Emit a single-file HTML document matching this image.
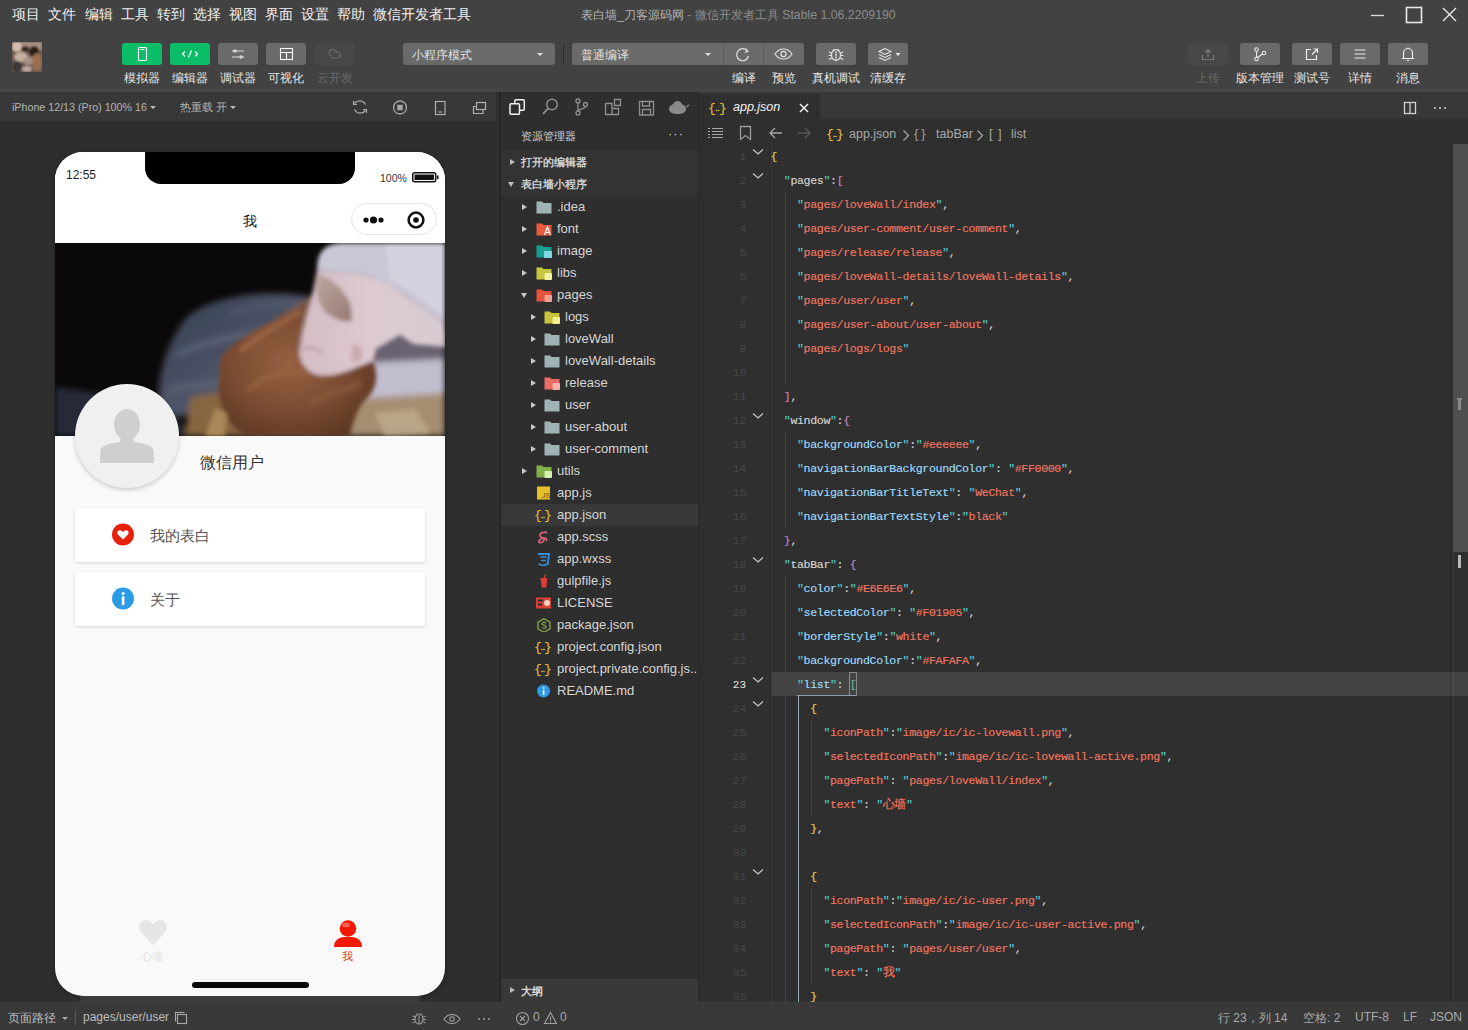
<!DOCTYPE html>
<html><head><meta charset="utf-8"><style>
*{box-sizing:border-box;margin:0;padding:0}
html,body{width:1468px;height:1030px;overflow:hidden;background:#2e2e2e;font-family:"Liberation Sans",sans-serif;color:#ddd}
.abs{position:absolute}
svg{display:block}
#top{position:absolute;left:0;top:0;width:1468px;height:92px;background:#424242;border-bottom:3px solid #464646}
.menu{position:absolute;top:6px;font-size:13.7px;color:#f0f0f0;white-space:nowrap}
.title{position:absolute;top:7px;left:581px;font-size:12.3px;color:#8c8c8c;white-space:nowrap}
.title b{font-weight:normal;color:#b4b4b4}
.tb{position:absolute;top:43px;width:40px;height:22px;border-radius:3px;background:#6a6a6a}
.tb.g{background:#0bbd66}
.tb.d{background:#474747}
.lbl{position:absolute;top:70px;font-size:12px;color:#e6e6e6;white-space:nowrap;text-align:center;width:60px}
.lbl.d{color:#686868}
.dd{background:#6a6a6a;border-radius:3px}
.dd span{position:absolute;top:4px;font-size:12px;color:#e0e0e0;white-space:nowrap}
.dd i{position:absolute;top:10px;width:0;height:0;border-left:3px solid transparent;border-right:3px solid transparent;border-top:3px solid #ddd}
.dd b{position:absolute;top:0;width:1px;height:22px;background:#5a5a5a}
#simbar{position:absolute;left:0;top:92px;width:496px;height:30px;background:#383838;border-bottom:1px solid #313131}
#sim{position:absolute;left:0;top:122px;width:496px;height:880px;background:#2e2e2e;overflow:hidden}
#vdiv{position:absolute;left:496px;top:92px;width:5px;height:910px;background:linear-gradient(90deg,#2b2b2b 0,#2b2b2b 1px,#323232 1px,#323232 3px,#242424 3px)}
#exp{position:absolute;left:501px;top:92px;width:199px;height:910px;background:#2e2e2e;overflow:hidden}
#editor{position:absolute;left:700px;top:92px;width:768px;height:910px;background:#2f2f2f;overflow:hidden}
#status{position:absolute;left:0;top:1002px;width:1468px;height:28px;background:#393939;border-top:1px solid #3e3e3e}
.sb{position:absolute;font-size:12.5px;color:#bdbdbd;white-space:nowrap;top:7px}
.row{position:absolute;left:0;width:199px;height:22px}
.row .t{position:absolute;top:3px;font-size:13px;color:#d6d6d6;white-space:nowrap}
.row .ar{position:absolute;top:8px;width:0;height:0;border-top:3.5px solid transparent;border-bottom:3.5px solid transparent;border-left:5px solid #c8c8c8}
.row .ad{position:absolute;top:9px;width:0;height:0;border-left:3.5px solid transparent;border-right:3.5px solid transparent;border-top:5px solid #c8c8c8}
.row svg{position:absolute;top:4px}
.code{position:absolute;left:0;width:768px;height:24px;font-family:"Liberation Mono",monospace;font-size:11.6px;letter-spacing:-0.36px;white-space:pre;line-height:24px;-webkit-text-stroke:0.15px}
.ln{position:absolute;left:0;width:46px;text-align:right;color:#4d4d4d;font-family:"Liberation Mono",monospace;font-size:11px;line-height:24px}
.k1{color:#d4d4d4}.k2{color:#9cdcfe}.k3{color:#f27660}.s{color:#f27660}.q{color:#56c8c8}.p{color:#d4d4d4}.y{color:#e8d44d}.m{color:#c586c0}
.guide{position:absolute;width:1px;background:#404040}
</style></head><body>
<div id="top">
  <div class="menu" style="left:12px">项目</div>
  <div class="menu" style="left:48px">文件</div>
  <div class="menu" style="left:85px">编辑</div>
  <div class="menu" style="left:121px">工具</div>
  <div class="menu" style="left:157px">转到</div>
  <div class="menu" style="left:193px">选择</div>
  <div class="menu" style="left:229px">视图</div>
  <div class="menu" style="left:265px">界面</div>
  <div class="menu" style="left:301px">设置</div>
  <div class="menu" style="left:337px">帮助</div>
  <div class="menu" style="left:373px">微信开发者工具</div>
  <div class="title"><b>表白墙_刀客源码网</b> - 微信开发者工具 Stable 1.06.2209190</div>
  <!-- window controls -->
  <svg class="abs" style="left:1360px;top:0" width="108" height="30" viewBox="0 0 108 30">
    <path d="M11 15.5H24" stroke="#e0e0e0" stroke-width="1.3"/>
    <rect x="46.5" y="7.5" width="15" height="15" fill="none" stroke="#e8e8e8" stroke-width="1.6"/>
    <path d="M83 8L96 21M96 8L83 21" stroke="#e8e8e8" stroke-width="1.4"/>
  </svg>
  <!-- avatar -->
  <svg class="abs" style="left:12px;top:42px" width="30" height="30" viewBox="0 0 30 30"><defs><filter id="abl"><feGaussianBlur stdDeviation="1.3"/></filter><clipPath id="acl"><rect width="30" height="30"/></clipPath></defs>
  <g clip-path="url(#acl)"><rect width="30" height="30" fill="#6a5a50"/><g filter="url(#abl)">
  <rect x="0" y="0" width="30" height="8" fill="#a89080"/><ellipse cx="5" cy="5" rx="5" ry="5" fill="#d8c0b0"/><ellipse cx="13" cy="7" rx="4" ry="3" fill="#3a2a20"/><ellipse cx="22" cy="9" rx="5" ry="5" fill="#2a1e18"/>
  <ellipse cx="9" cy="15" rx="7" ry="5" fill="#c8b0a0"/><ellipse cx="17" cy="19" rx="6" ry="4" fill="#a89088"/><ellipse cx="25" cy="20" rx="5" ry="9" fill="#9a7050"/>
  <ellipse cx="5" cy="25" rx="5" ry="6" fill="#3a3838"/><ellipse cx="15" cy="27" rx="5" ry="3" fill="#c0a8a0"/></g></g></svg>
  <!-- left buttons -->
  <div class="tb g" style="left:122px"><svg width="40" height="22"><rect x="16.5" y="4.5" width="8" height="13" rx="1" fill="none" stroke="#fff" stroke-width="1.1"/><path d="M18.5 6.5h4" stroke="#fff" stroke-width="1"/></svg></div>
  <div class="tb g" style="left:170px"><svg width="40" height="22"><path d="M15 8.5l-2.5 2.5 2.5 2.5M25 8.5l2.5 2.5-2.5 2.5M21.5 7.5l-3 7" fill="none" stroke="#fff" stroke-width="1.2"/></svg></div>
  <div class="tb" style="left:218px"><svg width="40" height="22"><path d="M14 8h12M14 14h12" stroke="#d8d8d8" stroke-width="1.2"/><circle cx="17" cy="8" r="1.8" fill="#d8d8d8"/><circle cx="23" cy="14" r="1.8" fill="#d8d8d8"/></svg></div>
  <div class="tb" style="left:266px"><svg width="40" height="22"><rect x="14.5" y="5.5" width="12" height="11" fill="none" stroke="#fff" stroke-width="1.1"/><path d="M14.5 9.5h12M20.5 9.5v7" stroke="#fff" stroke-width="1.1"/></svg></div>
  <div class="tb d" style="left:315px"><svg width="40" height="22"><path d="M16 13a3.5 3.5 0 1 1 5-4 3 3 0 1 1 2 6h-6a2.5 2.5 0 0 1-1-2z" fill="none" stroke="#6a6a6a" stroke-width="1.2"/></svg></div>
  <div class="lbl" style="left:112px">模拟器</div>
  <div class="lbl" style="left:160px">编辑器</div>
  <div class="lbl" style="left:208px">调试器</div>
  <div class="lbl" style="left:256px">可视化</div>
  <div class="lbl d" style="left:305px">云开发</div>
  <!-- mode dropdown -->
  <div class="abs dd" style="left:403px;top:43px;width:152px;height:22px"><span style="left:9px">小程序模式</span><i style="left:134px"></i></div>
  <div class="abs" style="left:563px;top:43px;width:1px;height:22px;background:#2c2c2c"></div>
  <div class="abs dd" style="left:572px;top:43px;width:232px;height:22px"><span style="left:9px">普通编译</span><i style="left:133px"></i>
    <b style="left:151px"></b><b style="left:191px"></b>
    <svg class="abs" style="left:151px;top:0" width="40" height="22"><path d="M24.5 8.2A6 6 0 1 0 25.5 13" fill="none" stroke="#e0e0e0" stroke-width="1.2"/><path d="M22.5 5.5l2.3 2.8-3 1.2" fill="none" stroke="#e0e0e0" stroke-width="1.2"/></svg>
    <svg class="abs" style="left:191px;top:0" width="41" height="22"><path d="M12 11c2.5-4 5.5-5 8.5-5s6 1 8.5 5c-2.5 4-5.5 5-8.5 5s-6-1-8.5-5z" fill="none" stroke="#e0e0e0" stroke-width="1.2"/><circle cx="20.5" cy="11" r="2.6" fill="none" stroke="#e0e0e0" stroke-width="1.2"/></svg>
  </div>
  <div class="tb" style="left:816px"><svg width="40" height="22"><ellipse cx="20" cy="12" rx="4.5" ry="5.5" fill="none" stroke="#e8e8e8" stroke-width="1.2"/><path d="M17 6.5l1.5 1.5M23 6.5l-1.5 1.5M20 8v9M13 9l3 1.5M27 9l-3 1.5M12.5 12.5h3M24.5 12.5h3M13 16.5l3-1.5M27 16.5l-3-1.5" stroke="#e8e8e8" stroke-width="1.1" fill="none"/></svg></div>
  <div class="tb" style="left:868px"><svg width="40" height="22"><path d="M11 8.5l6-3 6 3-6 3z M11 11.5l6 3 6-3 M11 14.5l6 3 6-3" fill="none" stroke="#e8e8e8" stroke-width="1.1"/><path d="M27.5 10h5l-2.5 3z" fill="#e8e8e8"/></svg></div>
  <div class="lbl" style="left:714px">编译</div>
  <div class="lbl" style="left:754px">预览</div>
  <div class="lbl" style="left:806px">真机调试</div>
  <div class="lbl" style="left:858px">清缓存</div>
  <!-- right buttons -->
  <div class="tb d" style="left:1188px"><svg width="40" height="22"><path d="M14.5 12v4.5h11V12M20 14V6.5M17 9.5l3-3 3 3" fill="none" stroke="#777" stroke-width="1.2"/></svg></div>
  <div class="tb" style="left:1240px"><svg width="40" height="22"><circle cx="16.5" cy="6.5" r="1.8" fill="none" stroke="#eee" stroke-width="1.1"/><circle cx="16.5" cy="16" r="1.8" fill="none" stroke="#eee" stroke-width="1.1"/><circle cx="24" cy="10" r="1.8" fill="none" stroke="#eee" stroke-width="1.1"/><path d="M16.5 8.3v5.9M22.5 11l-5 3.5" stroke="#eee" stroke-width="1.1"/></svg></div>
  <div class="tb" style="left:1292px"><svg width="40" height="22"><path d="M19 6.5h-4.5v10h10V12M20 11.5l5.5-5.5M21.5 6h4v4" fill="none" stroke="#eee" stroke-width="1.2"/></svg></div>
  <div class="tb" style="left:1340px"><svg width="40" height="22"><path d="M14.5 7h11M14.5 11h11M14.5 15h11" stroke="#eee" stroke-width="1.2"/></svg></div>
  <div class="tb" style="left:1388px"><svg width="40" height="22"><path d="M15.5 15.5V10a4.5 4.5 0 0 1 9 0v5.5M14 15.5h12M19 17.5h2M20 4.5v1" fill="none" stroke="#eee" stroke-width="1.2"/></svg></div>
  <div class="lbl d" style="left:1178px">上传</div>
  <div class="lbl" style="left:1230px">版本管理</div>
  <div class="lbl" style="left:1282px">测试号</div>
  <div class="lbl" style="left:1330px">详情</div>
  <div class="lbl" style="left:1378px">消息</div>
</div>

<div id="simbar">
<div class="abs" style="left:12px;top:9px;font-size:10.7px;color:#b4b4b4;white-space:nowrap">iPhone 12/13 (Pro) 100% 16</div>
<i class="abs" style="left:150px;top:14px;border-left:3px solid transparent;border-right:3px solid transparent;border-top:3.5px solid #bbb"></i>
<div class="abs" style="left:180px;top:8px;font-size:11px;color:#b4b4b4;white-space:nowrap">热重载 开</div>
<i class="abs" style="left:230px;top:14px;border-left:3px solid transparent;border-right:3px solid transparent;border-top:3.5px solid #bbb"></i>
<svg class="abs" style="left:340px;top:0" width="158" height="30" viewBox="0 0 158 30">
<path d="M14.5 11.5A6.5 6.5 0 0 1 25.5 12.5M25.5 18.5A6.5 6.5 0 0 1 14.5 17.5" fill="none" stroke="#a8a8a8" stroke-width="1.3"/>
<path d="M13.5 9v3.5h3.5M26.5 21v-3.5h-3.5" fill="none" stroke="#a8a8a8" stroke-width="1.2"/>
<circle cx="60" cy="15.5" r="6.5" fill="none" stroke="#a8a8a8" stroke-width="1.3"/>
<rect x="57.3" y="12.8" width="5.4" height="5.4" fill="#a8a8a8"/>
<rect x="95.5" y="9.5" width="9.5" height="13" fill="none" stroke="#b0b0b0" stroke-width="1.2"/>
<path d="M98.5 20h3.5" stroke="#b0b0b0" stroke-width="1.2"/>
<rect x="136.5" y="10.5" width="9" height="7" fill="none" stroke="#b0b0b0" stroke-width="1.2"/>
<path d="M136.5 14.5h-3v7h9.5v-4" fill="none" stroke="#b0b0b0" stroke-width="1.2"/>
</svg>
</div>
<div id="sim"><div class="abs" style="left:55px;top:30px;width:390px;height:844px;border-radius:28px;background:#f9f9f9;box-shadow:0 1px 4px rgba(0,0,0,0.35);overflow:hidden"><div class="abs" style="left:0;top:0;width:390px;height:91px;background:#fff"></div><div class="abs" style="left:90px;top:0;width:210px;height:32px;background:#000;border-radius:0 0 16px 16px"></div><div class="abs" style="left:11px;top:16px;font-size:12px;color:#222">12:55</div><div class="abs" style="left:325px;top:20px;font-size:10.5px;color:#333">100%</div><svg class="abs" style="left:357px;top:20px" width="27" height="11" viewBox="0 0 27 11"><rect x="0.75" y="0.75" width="23" height="9" rx="2" fill="none" stroke="#111" stroke-width="1.5"/><rect x="2.5" y="2.5" width="19.5" height="5.5" fill="#111"/><rect x="25" y="3.5" width="1.5" height="3.5" fill="#111"/></svg><div class="abs" style="left:188px;top:61px;font-size:14px;color:#111">我</div><div class="abs" style="left:296px;top:51px;width:86px;height:32px;border:1px solid #e4e4e4;border-radius:16px;background:#fff"></div><svg class="abs" style="left:296px;top:51px" width="86" height="32" viewBox="0 0 86 32"><circle cx="15" cy="17" r="2.6" fill="#111"/><circle cx="22.5" cy="17" r="3.6" fill="#111"/><circle cx="30" cy="17" r="2.6" fill="#111"/><circle cx="65" cy="17" r="7.4" fill="none" stroke="#111" stroke-width="2.5"/><circle cx="65" cy="17" r="2.8" fill="#111"/></svg><svg class="abs" style="left:0;top:91px" width="390" height="193" viewBox="0 0 390 193">
<defs>
<filter id="bl" x="-10%" y="-10%" width="120%" height="120%"><feGaussianBlur stdDeviation="3"/></filter>
<filter id="bl2" x="-10%" y="-10%" width="120%" height="120%"><feGaussianBlur stdDeviation="2.2"/></filter>
<filter id="bl4" x="-20%" y="-20%" width="140%" height="140%"><feGaussianBlur stdDeviation="4"/></filter>
<radialGradient id="hairg" cx="0.45" cy="0.45" r="0.65"><stop offset="0" stop-color="#966040"/><stop offset="0.55" stop-color="#7c4c32"/><stop offset="1" stop-color="#5a3522"/></radialGradient>
<linearGradient id="gauzeg" x1="0" y1="0" x2="1" y2="1"><stop offset="0" stop-color="#363d4e"/><stop offset="0.5" stop-color="#4c5366"/><stop offset="1" stop-color="#5e6577"/></linearGradient>
<linearGradient id="skin" x1="0" y1="0" x2="1" y2="0"><stop offset="0" stop-color="#d4bcc4"/><stop offset="0.5" stop-color="#dccad0"/><stop offset="1" stop-color="#d8cad2"/></linearGradient>
<linearGradient id="jaw" x1="0" y1="0" x2="1" y2="1"><stop offset="0" stop-color="#b8a098"/><stop offset="1" stop-color="#8a6e62"/></linearGradient>
</defs>
<rect width="390" height="193" fill="#0a0808"/>
<g filter="url(#bl)">
<path d="M0 144 L45 150 L108 158 L135 193 L0 193 Z" fill="#252b39"/>
<path d="M104 162 C102 130 112 100 131 75 C145 62 170 54 200 51 C225 49 250 52 266 56 L262 85 L215 98 L180 122 L168 165 L122 174 Z" fill="url(#gauzeg)"/>
<path d="M122 112 C150 98 190 90 235 86" stroke="#6c7487" stroke-width="6" fill="none" opacity="0.55"/>
<path d="M112 148 C140 140 160 142 172 138" stroke="#687080" stroke-width="7" fill="none" opacity="0.5"/>
<path d="M175 70 C200 62 230 60 255 62" stroke="#5a6274" stroke-width="5" fill="none" opacity="0.6"/>
<path d="M248 58 L300 40 L330 100 L318 193 L175 193 L168 118 Z" fill="#7c5a4a"/>
<path d="M316 96 L340 86 L390 90 L390 122 L318 122 Z" fill="#6a6270"/>
<path d="M310 120 L390 116 L390 158 L302 162 Z" fill="#c2becf"/>
<path d="M296 156 L390 150 L390 193 L290 193 Z" fill="#a68e72"/>
<path d="M135 154 L172 148 L198 193 L130 193 Z" fill="#86663f"/>
</g>
<g filter="url(#bl2)">
<path d="M262 27 C262 10 268 2 285 0 L390 0 L390 82 C375 70 360 58 345 50 C330 40 315 32 305 31 Z" fill="#c9c6d6"/>
<path d="M330 0 L390 0 L390 75 C372 60 355 46 335 36 Z" fill="#d5d2df"/>
<path d="M262 27 L305 31 C320 34 335 42 345 50 C360 58 375 70 390 82 L390 104 L358 101 L345 92 L321 106 L318 118 L300 128 L270 134 L248 128 L244 110 L247 90 L252 70 L258 48 Z" fill="url(#skin)"/>
<path d="M263 31 C276 34 290 48 296 62 L297 78 C288 80 276 76 268 66 C261 56 260 42 263 31 Z" fill="url(#jaw)" opacity="0.85"/>
<path d="M248 106 C254 104 262 106 268 110" stroke="#8e7070" stroke-width="2" fill="none" opacity="0.6"/>
<path d="M298 101 C304 100 308 106 307 114 C305 120 299 121 296 116 Z" fill="#caa8ac"/>
<path d="M167 112 C182 96 212 80 250 62 C247 75 243 90 243 105 C244 118 250 128 262 132 C275 134 290 130 302 124 L318 118 C325 135 320 150 308 159 C300 172 296 185 295 193 L192 193 C176 185 162 165 164 140 C164 128 165 118 167 112 Z" fill="url(#hairg)"/>
<path d="M185 108 C205 92 225 80 246 68" stroke="#a87250" stroke-width="6" fill="none" opacity="0.55"/>
<path d="M192 148 C210 132 230 126 250 132" stroke="#a06a46" stroke-width="6" fill="none" opacity="0.5"/>
<path d="M255 160 C272 150 290 148 306 140" stroke="#8e5c3a" stroke-width="7" fill="none" opacity="0.6"/>
<path d="M150 193 L160 165 L172 170 L170 193 Z" fill="#aa8658"/>
<path d="M320 170 L360 166 L375 190 L330 193 Z" fill="#c2ae92" opacity="0.7"/>
</g>
</svg>
<div class="abs" style="left:20px;top:232px;width:104px;height:104px;border-radius:50%;background:#f0f0f0;box-shadow:0 2px 4px rgba(0,0,0,0.18)"></div><svg class="abs" style="left:20px;top:232px" width="104" height="104" viewBox="0 0 104 104"><ellipse cx="52" cy="40.5" rx="13" ry="15.5" fill="#cfcfcf"/><path d="M46 52 L58 52 L59 58 C68 59 77 61 78.5 66 L79 79 L25 79 L25.5 66 C27 61 36 59 45 58 Z" fill="#cfcfcf"/></svg><div class="abs" style="left:145px;top:301px;font-size:16px;color:#333">微信用户</div><div class="abs" style="left:20px;top:356px;width:350px;height:54px;background:#fff;border-radius:2px;box-shadow:0 1px 3px rgba(0,0,0,0.14)"></div><svg class="abs" style="left:56px;top:371px" width="24" height="24" viewBox="0 0 24 24"><circle cx="12" cy="11.5" r="11" fill="#e8210d"/><path d="M12 16.5 L7.2 11.8 C5.6 10.2 6.4 7.3 8.8 7.3 C10.2 7.3 11.3 8.2 12 9.2 C12.7 8.2 13.8 7.3 15.2 7.3 C17.6 7.3 18.4 10.2 16.8 11.8 Z" fill="#fff"/></svg><div class="abs" style="left:95px;top:375px;font-size:14.5px;color:#555">我的表白</div><div class="abs" style="left:20px;top:420px;width:350px;height:54px;background:#fff;border-radius:2px;box-shadow:0 1px 3px rgba(0,0,0,0.14)"></div><svg class="abs" style="left:56px;top:435px" width="24" height="24" viewBox="0 0 24 24"><circle cx="12" cy="11.5" r="11" fill="#2c9be6"/><rect x="10.8" y="9.3" width="2.6" height="8.8" fill="#fff"/><circle cx="12.1" cy="6.5" r="1.5" fill="#fff"/></svg><div class="abs" style="left:95px;top:439px;font-size:14.5px;color:#555">关于</div><svg class="abs" style="left:83px;top:766px" width="30" height="28" viewBox="0 0 30 28"><path d="M15 27 L3.5 15 C-0.5 11 0.5 2.5 8 2 C11 2 13.5 4 15 6.5 C16.5 4 19 2 22 2 C29.5 2.5 30.5 11 26.5 15 Z" fill="#e6e6e6"/></svg><div class="abs" style="left:86px;top:797px;font-size:11px;color:#e2e2e2">心墙</div><svg class="abs" style="left:278px;top:766px" width="30" height="30" viewBox="0 0 30 30"><circle cx="15" cy="10.5" r="8.3" fill="#f01905"/><ellipse cx="13" cy="7" rx="4" ry="2.2" fill="#ff8070" opacity="0.7"/><path d="M1 29 C1 22 6 19.5 11 19 L19 19 C24 19.5 29 22 29 29 Z" fill="#f01905"/></svg><div class="abs" style="left:287px;top:797px;font-size:11px;color:#c83a28">我</div><div class="abs" style="left:137px;top:830px;width:117px;height:6px;border-radius:3px;background:#0a0a0a"></div></div><div class="abs" style="left:80px;top:874px;width:340px;height:6px;background:#3b3b3b"></div></div>
<div id="vdiv"></div>
<div id="exp"><div class="abs" style="left:0;top:0;width:199px;height:30px;background:#2e2e2e"></div><svg class="abs" style="left:0;top:0" width="199" height="30" viewBox="0 0 199 30">
<rect x="13.8" y="7.8" width="9.5" height="10.5" rx="1" fill="none" stroke="#f2f2f2" stroke-width="1.5"/>
<rect x="9" y="11.8" width="9.5" height="10.5" rx="1" fill="#2e2e2e" stroke="#f2f2f2" stroke-width="1.5"/>
<circle cx="51" cy="12.5" r="5.3" fill="none" stroke="#909090" stroke-width="1.4"/>
<path d="M47.2 16.3l-5.2 5.5" stroke="#909090" stroke-width="1.7"/>
<circle cx="77" cy="9" r="2" fill="none" stroke="#909090" stroke-width="1.3"/>
<circle cx="77" cy="21" r="2" fill="none" stroke="#909090" stroke-width="1.3"/>
<circle cx="84.5" cy="12.5" r="2" fill="none" stroke="#909090" stroke-width="1.3"/>
<path d="M77 11v8M84.5 14.5c0 2.5-7.5 2.5-7.5 4.5" fill="none" stroke="#909090" stroke-width="1.3"/>
<path d="M104.5 11.5h6.5v11h-6.5zM111 16.5h6.5v6h-6.5z" fill="none" stroke="#909090" stroke-width="1.3"/>
<path d="M113.5 7.5h6v6h-6z" fill="none" stroke="#909090" stroke-width="1.3"/>
<path d="M138.5 9.5h14v13.5h-14zM141.5 9.5v4.5h7v-4.5M141.5 23v-5.5h8v5.5" fill="none" stroke="#909090" stroke-width="1.3"/>
<path d="M168 17c0-3.5 4-5.5 8.5-5.5s8.5 2 8.5 5.5c0 3-3.5 5-8.5 5s-8.5-2-8.5-5z" fill="#8a8a8a"/>
<path d="M172 12c1-2 3-3 4.5-3s3.5 1 4.5 3z" fill="#8a8a8a"/>
<path d="M185 15l3-2" stroke="#8a8a8a" stroke-width="1.5"/>
</svg><div class="abs" style="left:20px;top:37px;font-size:11px;color:#cfcfcf">资源管理器</div><div class="abs" style="left:167px;top:34px;font-size:13px;color:#cfcfcf;letter-spacing:1px">···</div><div class="abs" style="left:0;top:59px;width:199px;height:44px;background:#333"></div><div class="row" style="top:59px"><i class="ar" style="left:9px;border-left-color:#bbb"></i><span class="t" style="left:20px;top:4px;font-size:11px;font-weight:bold;color:#cfcfcf">打开的编辑器</span></div><div class="row" style="top:81px"><i class="ad" style="left:7px;border-top-color:#bbb"></i><span class="t" style="left:20px;top:4px;font-size:11px;font-weight:bold;color:#cfcfcf">表白墙小程序</span></div><div class="row" style="top:104px;"><i class="ar" style="left:21px"></i><svg style="left:35px" width="16" height="14" viewBox="0 0 16 14"><path d="M0.5 1.5h5.5l1.5 1.5H15.5v10.5H0.5z" fill="#9fb3b5"/></svg><span class="t" style="left:56px">.idea</span></div><div class="row" style="top:126px;"><i class="ar" style="left:21px"></i><svg style="left:35px" width="16" height="14" viewBox="0 0 16 14"><path d="M0.5 1.5h5.5l1.5 1.5H15.5v10.5H0.5z" fill="#e55b3c"/><path d="M8.5 13l3-8 3 8M9.7 10.5h3.6" stroke="#fff" stroke-width="1.2" fill="none"/></svg><span class="t" style="left:56px">font</span></div><div class="row" style="top:148px;"><i class="ar" style="left:21px"></i><svg style="left:35px" width="16" height="14" viewBox="0 0 16 14"><path d="M0.5 1.5h5.5l1.5 1.5H15.5v10.5H0.5z" fill="#17a08f"/><rect x="8" y="7" width="8" height="7" fill="#7ed6e6"/></svg><span class="t" style="left:56px">image</span></div><div class="row" style="top:170px;"><i class="ar" style="left:21px"></i><svg style="left:35px" width="16" height="14" viewBox="0 0 16 14"><path d="M0.5 1.5h5.5l1.5 1.5H15.5v10.5H0.5z" fill="#c5c63f"/><rect x="8.5" y="7" width="7.5" height="7" rx="1" fill="#f0f0a0"/></svg><span class="t" style="left:56px">libs</span></div><div class="row" style="top:192px;"><i class="ad" style="left:20px"></i><svg style="left:35px" width="16" height="14" viewBox="0 0 16 14"><path d="M0.5 1.5h5.5l1.5 1.5H15.5v10.5H0.5z" fill="#e4533d"/><rect x="8.5" y="7" width="7.5" height="7" rx="1" fill="#f0a090"/></svg><span class="t" style="left:56px">pages</span></div><div class="row" style="top:214px;"><i class="ar" style="left:30px"></i><svg style="left:43px" width="16" height="14" viewBox="0 0 16 14"><path d="M0.5 1.5h5.5l1.5 1.5H15.5v10.5H0.5z" fill="#c9c43a"/><rect x="8.5" y="7" width="7.5" height="7" rx="1" fill="#f2ee90"/></svg><span class="t" style="left:64px">logs</span></div><div class="row" style="top:236px;"><i class="ar" style="left:30px"></i><svg style="left:43px" width="16" height="14" viewBox="0 0 16 14"><path d="M0.5 1.5h5.5l1.5 1.5H15.5v10.5H0.5z" fill="#9fb3b5"/></svg><span class="t" style="left:64px">loveWall</span></div><div class="row" style="top:258px;"><i class="ar" style="left:30px"></i><svg style="left:43px" width="16" height="14" viewBox="0 0 16 14"><path d="M0.5 1.5h5.5l1.5 1.5H15.5v10.5H0.5z" fill="#9fb3b5"/></svg><span class="t" style="left:64px">loveWall-details</span></div><div class="row" style="top:280px;"><i class="ar" style="left:30px"></i><svg style="left:43px" width="16" height="14" viewBox="0 0 16 14"><path d="M0.5 1.5h5.5l1.5 1.5H15.5v10.5H0.5z" fill="#ea6a64"/><rect x="8.5" y="7" width="7.5" height="7" rx="1" fill="#f7b0aa"/></svg><span class="t" style="left:64px">release</span></div><div class="row" style="top:302px;"><i class="ar" style="left:30px"></i><svg style="left:43px" width="16" height="14" viewBox="0 0 16 14"><path d="M0.5 1.5h5.5l1.5 1.5H15.5v10.5H0.5z" fill="#9fb3b5"/></svg><span class="t" style="left:64px">user</span></div><div class="row" style="top:324px;"><i class="ar" style="left:30px"></i><svg style="left:43px" width="16" height="14" viewBox="0 0 16 14"><path d="M0.5 1.5h5.5l1.5 1.5H15.5v10.5H0.5z" fill="#9fb3b5"/></svg><span class="t" style="left:64px">user-about</span></div><div class="row" style="top:346px;"><i class="ar" style="left:30px"></i><svg style="left:43px" width="16" height="14" viewBox="0 0 16 14"><path d="M0.5 1.5h5.5l1.5 1.5H15.5v10.5H0.5z" fill="#9fb3b5"/></svg><span class="t" style="left:64px">user-comment</span></div><div class="row" style="top:368px;"><i class="ar" style="left:21px"></i><svg style="left:35px" width="16" height="14" viewBox="0 0 16 14"><path d="M0.5 1.5h5.5l1.5 1.5H15.5v10.5H0.5z" fill="#7fb04a"/><rect x="8.5" y="7" width="7.5" height="7" rx="1" fill="#d8f0b0"/></svg><span class="t" style="left:56px">utils</span></div><div class="row" style="top:390px;"><svg style="left:35px" width="16" height="14" viewBox="0 0 16 14"><rect x="1" y="0.5" width="13" height="13" fill="#e8c02a"/><text x="6" y="12" font-size="7" fill="#5a4a00" font-family="Liberation Sans">JS</text></svg><span class="t" style="left:56px">app.js</span></div><div class="row" style="top:412px; background:#393939;"><svg style="left:33px;top:3px" width="18" height="16" viewBox="0 0 18 16"><text x="0" y="12" font-size="13" fill="#e8c43a" font-family="Liberation Mono">{</text><text x="10" y="12" font-size="13" fill="#e8c43a" font-family="Liberation Mono">}</text><circle cx="8" cy="10.5" r="0.8" fill="#e8c43a"/><circle cx="10" cy="10.5" r="0.8" fill="#e8c43a"/></svg><span class="t" style="left:56px">app.json</span></div><div class="row" style="top:434px;"><svg style="left:35px" width="16" height="14" viewBox="0 0 16 14"><path d="M11 3c-2-2-8 0-7 3s5 1 4 4-4 3-5 2 2-4 5-4 3 2 2 3" fill="none" stroke="#d0607a" stroke-width="1.8"/></svg><span class="t" style="left:56px">app.scss</span></div><div class="row" style="top:456px;"><svg style="left:35px" width="16" height="14" viewBox="0 0 16 14"><path d="M2 2h11l-1.2 10L7 13.5 2.5 12" fill="none" stroke="#3a8fd8" stroke-width="1.8"/><path d="M4.5 5h6M5 8.5h5" stroke="#3a8fd8" stroke-width="1.5"/></svg><span class="t" style="left:56px">app.wxss</span></div><div class="row" style="top:478px;"><svg style="left:35px" width="16" height="14" viewBox="0 0 16 14"><path d="M4.5 4h7l-1.2 9.5h-4.6z" fill="#e03a3a"/><path d="M8 4l1.5-3.5" stroke="#e03a3a" stroke-width="1.2"/></svg><span class="t" style="left:56px">gulpfile.js</span></div><div class="row" style="top:500px;"><svg style="left:34px" width="18" height="14" viewBox="0 0 18 14"><rect x="1" y="1.5" width="15" height="11" fill="#d8403a"/><rect x="3" y="3.5" width="5" height="2" fill="#2b2b2b"/><rect x="3" y="7.5" width="4" height="2" fill="#2b2b2b"/><circle cx="12" cy="7" r="3" fill="#f7d0c0"/></svg><span class="t" style="left:56px">LICENSE</span></div><div class="row" style="top:522px;"><svg style="left:35px" width="16" height="14" viewBox="0 0 16 14"><path d="M8 0.8l6 3.4v6.6l-6 3.4-6-3.4V4.2z" fill="none" stroke="#8aa64a" stroke-width="1.3"/><path d="M10 5c-1-1-4-1-4 .8s4 1 4 3-3 1.6-4 .6" fill="none" stroke="#8aa64a" stroke-width="1.2"/></svg><span class="t" style="left:56px">package.json</span></div><div class="row" style="top:544px;"><svg style="left:33px;top:3px" width="18" height="16" viewBox="0 0 18 16"><text x="0" y="12" font-size="13" fill="#e8c43a" font-family="Liberation Mono">{</text><text x="10" y="12" font-size="13" fill="#e8c43a" font-family="Liberation Mono">}</text><circle cx="8" cy="10.5" r="0.8" fill="#e8c43a"/><circle cx="10" cy="10.5" r="0.8" fill="#e8c43a"/></svg><span class="t" style="left:56px">project.config.json</span></div><div class="row" style="top:566px;"><svg style="left:33px;top:3px" width="18" height="16" viewBox="0 0 18 16"><text x="0" y="12" font-size="13" fill="#e8c43a" font-family="Liberation Mono">{</text><text x="10" y="12" font-size="13" fill="#e8c43a" font-family="Liberation Mono">}</text><circle cx="8" cy="10.5" r="0.8" fill="#e8c43a"/><circle cx="10" cy="10.5" r="0.8" fill="#e8c43a"/></svg><span class="t" style="left:56px">project.private.config.js...</span></div><div class="row" style="top:588px;"><svg style="left:35px" width="16" height="14" viewBox="0 0 16 14"><circle cx="7.5" cy="7" r="6.5" fill="#2d9ae8"/><rect x="6.8" y="6" width="1.6" height="5" fill="#fff"/><circle cx="7.6" cy="3.9" r="1" fill="#fff"/></svg><span class="t" style="left:56px">README.md</span></div><div class="abs" style="left:0;top:887px;width:199px;height:23px;background:#393939"></div><i class="abs" style="left:9px;top:895px;width:0;height:0;border-top:3.5px solid transparent;border-bottom:3.5px solid transparent;border-left:5px solid #bbb"></i><div class="abs" style="left:20px;top:892px;font-size:11px;font-weight:bold;color:#d8d8d8">大纲</div><div class="abs" style="left:197px;top:0;width:2px;height:910px;background:#2b2b2b"></div></div>
<div id="editor"><div class="abs" style="left:0;top:0;width:768px;height:28px;background:#383838;border-bottom:2px solid #323232"></div><div class="abs" style="left:0;top:2px;width:120px;height:28px;background:#2f2f2f"></div><svg class="abs" style="left:8px;top:7px" width="22" height="18" viewBox="0 0 22 18"><text x="0" y="13" font-size="13" fill="#e8c43a" font-family="Liberation Mono">{</text><text x="11" y="13" font-size="13" fill="#e8c43a" font-family="Liberation Mono">}</text><circle cx="8.5" cy="11.5" r="0.8" fill="#e8c43a"/><circle cx="10.5" cy="11.5" r="0.8" fill="#e8c43a"/></svg><div class="abs" style="left:33px;top:8px;font-size:12.5px;font-style:italic;color:#f4f4f4">app.json</div><svg class="abs" style="left:98px;top:10px" width="12" height="12" viewBox="0 0 12 12"><path d="M2 2l8 8M10 2l-8 8" stroke="#f0f0f0" stroke-width="1.5"/></svg><svg class="abs" style="left:702px;top:6px" width="60" height="20" viewBox="0 0 60 20"><rect x="2.5" y="4.5" width="11" height="11" fill="none" stroke="#d0d0d0" stroke-width="1.3"/><path d="M8 4.5v11" stroke="#d0d0d0" stroke-width="1.3"/><circle cx="33" cy="10" r="1" fill="#d0d0d0"/><circle cx="38" cy="10" r="1" fill="#d0d0d0"/><circle cx="43" cy="10" r="1" fill="#d0d0d0"/></svg><svg class="abs" style="left:0;top:30px" width="125" height="22" viewBox="0 0 125 22">
<path d="M8 6.5h2M8 9.5h2M8 12.5h2M8 15.5h2M12 6.5h11M12 9.5h11M12 12.5h11M12 15.5h11" stroke="#a8a8a8" stroke-width="1.1"/>
<path d="M40.5 4.5h10v13l-5-4-5 4z" fill="none" stroke="#9a9a9a" stroke-width="1.3"/>
<path d="M82 11H70M75 6l-5 5 5 5" fill="none" stroke="#a8a8a8" stroke-width="1.3"/>
<path d="M98 11h12M105 6l5 5-5 5" fill="none" stroke="#5a5a5a" stroke-width="1.3"/>
</svg><svg class="abs" style="left:126px;top:34px" width="20" height="16" viewBox="0 0 20 16"><text x="0" y="12" font-size="13" fill="#e8c43a" font-family="Liberation Mono">{</text><text x="10" y="12" font-size="13" fill="#e8c43a" font-family="Liberation Mono">}</text><circle cx="8" cy="10.5" r="0.8" fill="#e8c43a"/><circle cx="10" cy="10.5" r="0.8" fill="#e8c43a"/></svg><div class="abs" style="left:149px;top:35px;font-size:12.5px;color:#a8a8a8;white-space:nowrap">app.json</div><svg class="abs" style="left:200px;top:36px" width="14" height="14" viewBox="0 0 14 14"><path d="M3.5 2.5l5 5-5 5" fill="none" stroke="#a8a8a8" stroke-width="1.2"/></svg><div class="abs" style="left:214px;top:34px;font-size:13px;color:#a0a0a0;white-space:nowrap;letter-spacing:3px">{}</div><div class="abs" style="left:236px;top:35px;font-size:12.5px;color:#a8a8a8;white-space:nowrap">tabBar</div><svg class="abs" style="left:274px;top:36px" width="14" height="14" viewBox="0 0 14 14"><path d="M3.5 2.5l5 5-5 5" fill="none" stroke="#a8a8a8" stroke-width="1.2"/></svg><div class="abs" style="left:289px;top:34px;font-size:13px;color:#a8a8a8;white-space:nowrap">[</div><div class="abs" style="left:298px;top:34px;font-size:13px;color:#a8a8a8;white-space:nowrap">]</div><div class="abs" style="left:311px;top:35px;font-size:12.5px;color:#a8a8a8;white-space:nowrap">list</div><div class="abs" style="left:71px;top:580px;width:697px;height:24px;background:#444"></div><div class="abs" style="left:149px;top:580px;width:8px;height:24px;border:1px solid #8a8a8a"></div><div class="abs" style="left:97px;top:603px;width:60px;height:1px;background:#8aa0b0"></div><div class="guide" style="left:71px;top:52px;height:858px;background:#3d3d3d"></div><div class="guide" style="left:85px;top:100px;height:192px;background:#45453a"></div><div class="guide" style="left:85px;top:340px;height:96px;background:#45453a"></div><div class="guide" style="left:85px;top:484px;height:96px;background:#45453a"></div><div class="guide" style="left:85px;top:604px;height:312px;background:#45453a"></div><div class="guide" style="left:98px;top:604px;height:312px;background:#98aab4"></div><div class="guide" style="left:111px;top:628px;height:96px;background:#45453a"></div><div class="guide" style="left:111px;top:796px;height:96px;background:#45453a"></div><div class="ln" style="top:53px;color:#474747">1</div><div class="code" style="left:70.6px;top:53px"><span class="y">{</span></div><div class="ln" style="top:77px;color:#474747">2</div><div class="code" style="left:70.6px;top:77px">  <span class="q">"</span><span class="k1">pages</span><span class="q">"</span><span class="p">:</span><span class="m">[</span></div><div class="ln" style="top:101px;color:#474747">3</div><div class="code" style="left:70.6px;top:101px">    <span class="q">"</span><span class="s">pages/loveWall/index</span><span class="q">"</span><span class="p">,</span></div><div class="ln" style="top:125px;color:#474747">4</div><div class="code" style="left:70.6px;top:125px">    <span class="q">"</span><span class="s">pages/user-comment/user-comment</span><span class="q">"</span><span class="p">,</span></div><div class="ln" style="top:149px;color:#474747">5</div><div class="code" style="left:70.6px;top:149px">    <span class="q">"</span><span class="s">pages/release/release</span><span class="q">"</span><span class="p">,</span></div><div class="ln" style="top:173px;color:#474747">6</div><div class="code" style="left:70.6px;top:173px">    <span class="q">"</span><span class="s">pages/loveWall-details/loveWall-details</span><span class="q">"</span><span class="p">,</span></div><div class="ln" style="top:197px;color:#474747">7</div><div class="code" style="left:70.6px;top:197px">    <span class="q">"</span><span class="s">pages/user/user</span><span class="q">"</span><span class="p">,</span></div><div class="ln" style="top:221px;color:#474747">8</div><div class="code" style="left:70.6px;top:221px">    <span class="q">"</span><span class="s">pages/user-about/user-about</span><span class="q">"</span><span class="p">,</span></div><div class="ln" style="top:245px;color:#474747">9</div><div class="code" style="left:70.6px;top:245px">    <span class="q">"</span><span class="s">pages/logs/logs</span><span class="q">"</span></div><div class="ln" style="top:269px;color:#474747">10</div><div class="code" style="left:70.6px;top:269px"></div><div class="ln" style="top:293px;color:#474747">11</div><div class="code" style="left:70.6px;top:293px">  <span class="m">]</span><span class="p">,</span></div><div class="ln" style="top:317px;color:#474747">12</div><div class="code" style="left:70.6px;top:317px">  <span class="q">"</span><span class="k1">window</span><span class="q">"</span><span class="p">:</span><span class="m">{</span></div><div class="ln" style="top:341px;color:#474747">13</div><div class="code" style="left:70.6px;top:341px">    <span class="q">"</span><span class="k2">backgroundColor</span><span class="q">"</span><span class="p">:</span><span class="q">"</span><span class="s">#eeeeee</span><span class="q">"</span><span class="p">,</span></div><div class="ln" style="top:365px;color:#474747">14</div><div class="code" style="left:70.6px;top:365px">    <span class="q">"</span><span class="k2">navigationBarBackgroundColor</span><span class="q">"</span><span class="p">:</span> <span class="q">"</span><span class="s">#FF0000</span><span class="q">"</span><span class="p">,</span></div><div class="ln" style="top:389px;color:#474747">15</div><div class="code" style="left:70.6px;top:389px">    <span class="q">"</span><span class="k2">navigationBarTitleText</span><span class="q">"</span><span class="p">:</span> <span class="q">"</span><span class="s">WeChat</span><span class="q">"</span><span class="p">,</span></div><div class="ln" style="top:413px;color:#474747">16</div><div class="code" style="left:70.6px;top:413px">    <span class="q">"</span><span class="k2">navigationBarTextStyle</span><span class="q">"</span><span class="p">:</span><span class="q">"</span><span class="s">black</span><span class="q">"</span></div><div class="ln" style="top:437px;color:#474747">17</div><div class="code" style="left:70.6px;top:437px">  <span class="m">}</span><span class="p">,</span></div><div class="ln" style="top:461px;color:#474747">18</div><div class="code" style="left:70.6px;top:461px">  <span class="q">"</span><span class="k1">tabBar</span><span class="q">"</span><span class="p">:</span> <span class="m">{</span></div><div class="ln" style="top:485px;color:#474747">19</div><div class="code" style="left:70.6px;top:485px">    <span class="q">"</span><span class="k2">color</span><span class="q">"</span><span class="p">:</span><span class="q">"</span><span class="s">#E6E6E6</span><span class="q">"</span><span class="p">,</span></div><div class="ln" style="top:509px;color:#474747">20</div><div class="code" style="left:70.6px;top:509px">    <span class="q">"</span><span class="k2">selectedColor</span><span class="q">"</span><span class="p">:</span> <span class="q">"</span><span class="s">#F01905</span><span class="q">"</span><span class="p">,</span></div><div class="ln" style="top:533px;color:#474747">21</div><div class="code" style="left:70.6px;top:533px">    <span class="q">"</span><span class="k2">borderStyle</span><span class="q">"</span><span class="p">:</span><span class="q">"</span><span class="s">white</span><span class="q">"</span><span class="p">,</span></div><div class="ln" style="top:557px;color:#474747">22</div><div class="code" style="left:70.6px;top:557px">    <span class="q">"</span><span class="k2">backgroundColor</span><span class="q">"</span><span class="p">:</span><span class="q">"</span><span class="s">#FAFAFA</span><span class="q">"</span><span class="p">,</span></div><div class="ln" style="top:581px;color:#e8e8e8">23</div><div class="code" style="left:70.6px;top:581px">    <span class="q">"</span><span class="k2">list</span><span class="q">"</span><span class="p">:</span> <span style="color:#6ab0a0">[</span></div><div class="ln" style="top:605px;color:#474747">24</div><div class="code" style="left:70.6px;top:605px">      <span class="y">{</span></div><div class="ln" style="top:629px;color:#474747">25</div><div class="code" style="left:70.6px;top:629px">        <span class="q">"</span><span class="k3">iconPath</span><span class="q">"</span><span class="p">:</span><span class="q">"</span><span class="s">image/ic/ic-lovewall.png</span><span class="q">"</span><span class="p">,</span></div><div class="ln" style="top:653px;color:#474747">26</div><div class="code" style="left:70.6px;top:653px">        <span class="q">"</span><span class="k3">selectedIconPath</span><span class="q">"</span><span class="p">:</span><span class="q">"</span><span class="s">image/ic/ic-lovewall-active.png</span><span class="q">"</span><span class="p">,</span></div><div class="ln" style="top:677px;color:#474747">27</div><div class="code" style="left:70.6px;top:677px">        <span class="q">"</span><span class="k3">pagePath</span><span class="q">"</span><span class="p">:</span> <span class="q">"</span><span class="s">pages/loveWall/index</span><span class="q">"</span><span class="p">,</span></div><div class="ln" style="top:701px;color:#474747">28</div><div class="code" style="left:70.6px;top:701px">        <span class="q">"</span><span class="k3">text</span><span class="q">"</span><span class="p">:</span> <span class="q">"</span><span class="s">心墙</span><span class="q">"</span></div><div class="ln" style="top:725px;color:#474747">29</div><div class="code" style="left:70.6px;top:725px">      <span class="y">}</span><span class="p">,</span></div><div class="ln" style="top:749px;color:#474747">30</div><div class="code" style="left:70.6px;top:749px"></div><div class="ln" style="top:773px;color:#474747">31</div><div class="code" style="left:70.6px;top:773px">      <span class="y">{</span></div><div class="ln" style="top:797px;color:#474747">32</div><div class="code" style="left:70.6px;top:797px">        <span class="q">"</span><span class="k3">iconPath</span><span class="q">"</span><span class="p">:</span><span class="q">"</span><span class="s">image/ic/ic-user.png</span><span class="q">"</span><span class="p">,</span></div><div class="ln" style="top:821px;color:#474747">33</div><div class="code" style="left:70.6px;top:821px">        <span class="q">"</span><span class="k3">selectedIconPath</span><span class="q">"</span><span class="p">:</span><span class="q">"</span><span class="s">image/ic/ic-user-active.png</span><span class="q">"</span><span class="p">,</span></div><div class="ln" style="top:845px;color:#474747">34</div><div class="code" style="left:70.6px;top:845px">        <span class="q">"</span><span class="k3">pagePath</span><span class="q">"</span><span class="p">:</span> <span class="q">"</span><span class="s">pages/user/user</span><span class="q">"</span><span class="p">,</span></div><div class="ln" style="top:869px;color:#474747">35</div><div class="code" style="left:70.6px;top:869px">        <span class="q">"</span><span class="k3">text</span><span class="q">"</span><span class="p">:</span> <span class="q">"</span><span class="s">我</span><span class="q">"</span></div><div class="ln" style="top:893px;color:#474747">36</div><div class="code" style="left:70.6px;top:893px">      <span class="y">}</span></div><svg class="abs" style="left:52px;top:56px" width="12" height="8" viewBox="0 0 12 8"><path d="M1 1.5l5 4.5 5-4.5" fill="none" stroke="#c8c8c8" stroke-width="1.3"/></svg><svg class="abs" style="left:52px;top:80px" width="12" height="8" viewBox="0 0 12 8"><path d="M1 1.5l5 4.5 5-4.5" fill="none" stroke="#c8c8c8" stroke-width="1.3"/></svg><svg class="abs" style="left:52px;top:320px" width="12" height="8" viewBox="0 0 12 8"><path d="M1 1.5l5 4.5 5-4.5" fill="none" stroke="#c8c8c8" stroke-width="1.3"/></svg><svg class="abs" style="left:52px;top:464px" width="12" height="8" viewBox="0 0 12 8"><path d="M1 1.5l5 4.5 5-4.5" fill="none" stroke="#c8c8c8" stroke-width="1.3"/></svg><svg class="abs" style="left:52px;top:584px" width="12" height="8" viewBox="0 0 12 8"><path d="M1 1.5l5 4.5 5-4.5" fill="none" stroke="#c8c8c8" stroke-width="1.3"/></svg><svg class="abs" style="left:52px;top:608px" width="12" height="8" viewBox="0 0 12 8"><path d="M1 1.5l5 4.5 5-4.5" fill="none" stroke="#c8c8c8" stroke-width="1.3"/></svg><svg class="abs" style="left:52px;top:776px" width="12" height="8" viewBox="0 0 12 8"><path d="M1 1.5l5 4.5 5-4.5" fill="none" stroke="#c8c8c8" stroke-width="1.3"/></svg><div class="abs" style="left:750px;top:52px;width:1px;height:858px;background:rgba(0,0,0,0.15)"></div><div class="abs" style="left:753px;top:52px;width:1px;height:858px;background:rgba(255,255,255,0.05)"></div><div class="abs" style="left:753px;top:52px;width:15px;height:408px;background:#4f4f4f"></div><div class="abs" style="left:758px;top:463px;width:3px;height:13px;background:#b8b8b8"></div><div class="abs" style="left:757px;top:306px;width:5px;height:2px;background:#8a8a8a"></div><div class="abs" style="left:758px;top:307px;width:3px;height:11px;background:#8a8a8a"></div></div>
<div id="status">
<div class="sb" style="left:8px;top:7px;font-size:12px">页面路径</div>
<i class="abs" style="left:62px;top:14px;border-left:3px solid transparent;border-right:3px solid transparent;border-top:3.5px solid #aaa"></i>
<div class="abs" style="left:75px;top:8px;width:1px;height:14px;background:#5a5a5a"></div>
<div class="sb" style="left:83px;top:7px;font-size:12px">pages/user/user</div>
<svg class="abs" style="left:174px;top:8px" width="14" height="14" viewBox="0 0 14 14"><rect x="3.5" y="3.5" width="9" height="9" fill="none" stroke="#aaa" stroke-width="1.1"/><path d="M1.5 10.5v-9h9" fill="none" stroke="#aaa" stroke-width="1.1"/></svg>
<svg class="abs" style="left:408px;top:6px" width="90" height="18" viewBox="0 0 90 18"><ellipse cx="11" cy="10" rx="4" ry="5" fill="none" stroke="#a0a0a0" stroke-width="1.1"/><path d="M8.5 4.5l1.3 1.3M13.5 4.5l-1.3 1.3M11 6v9M4.5 7l2.5 1.3M17.5 7l-2.5 1.3M4 10.5h3M15 10.5h3M4.5 14l2.5-1.3M17.5 14l-2.5-1.3" stroke="#a0a0a0" stroke-width="1" fill="none"/>
<path d="M36 10c2-3 4.5-4.5 8-4.5s6 1.5 8 4.5c-2 3-4.5 4.5-8 4.5s-6-1.5-8-4.5z" fill="none" stroke="#a0a0a0" stroke-width="1.1"/><circle cx="44" cy="10" r="2.2" fill="none" stroke="#a0a0a0" stroke-width="1.1"/>
<circle cx="71" cy="10" r="1" fill="#a0a0a0"/><circle cx="76" cy="10" r="1" fill="#a0a0a0"/><circle cx="81" cy="10" r="1" fill="#a0a0a0"/></svg>
<svg class="abs" style="left:514px;top:6px" width="60" height="18" viewBox="0 0 60 18"><circle cx="8.5" cy="9.5" r="6" fill="none" stroke="#a0a0a0" stroke-width="1.1"/><path d="M6 7l5 5M11 7l-5 5" stroke="#a0a0a0" stroke-width="1.1"/><path d="M36.5 3.5l6 11h-12z" fill="none" stroke="#a0a0a0" stroke-width="1.1"/><path d="M36.5 7.5v4M36.5 12.5v1" stroke="#a0a0a0" stroke-width="1.1"/></svg>
<div class="sb" style="left:533px;top:7px;font-size:12px;color:#a8a8a8">0</div>
<div class="sb" style="left:560px;top:7px;font-size:12px;color:#a8a8a8">0</div>
<div class="sb" style="left:1218px;top:7px;font-size:12px;color:#a8a8a8">行 23，列 14</div>
<div class="sb" style="left:1303px;top:7px;font-size:12px;color:#a8a8a8">空格: 2</div>
<div class="sb" style="left:1355px;top:7px;font-size:12px;color:#a8a8a8">UTF-8</div>
<div class="sb" style="left:1403px;top:7px;font-size:12px;color:#a8a8a8">LF</div>
<div class="sb" style="left:1430px;top:7px;font-size:12px;color:#a8a8a8">JSON</div>
</div>
</body></html>
